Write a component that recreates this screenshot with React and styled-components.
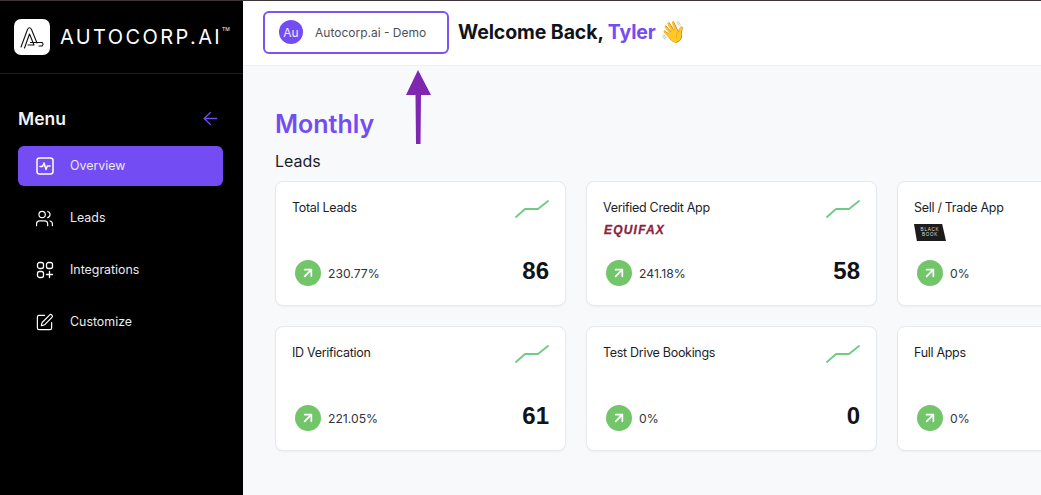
import React from 'react';
import styled, { createGlobalStyle } from 'styled-components';
import { ArrowLeft, ArrowUpRight, Users, SquarePen } from 'lucide-react';

const GlobalStyle = createGlobalStyle`
  html, body {
    margin: 0;
    padding: 0;
    height: 100%;
    overflow: hidden;
    background: #f8f9fb;
    font-family: Inter, "Liberation Sans", sans-serif;
  }
  * { box-sizing: border-box; }
`;

const Page = styled.div`
  position: relative;
  display: flex;
  width: 1041px;
  height: 495px;
  overflow: hidden;
  border-top: 1px solid #3d3537;
`;

const Sidebar = styled.aside`
  flex: 0 0 243px;
  background: #000;
  color: #fff;
  display: flex;
  flex-direction: column;
`;

const Brand = styled.div`
  height: 73px;
  flex: 0 0 73px;
  border-bottom: 1px solid #1d1d24;
  display: flex;
  align-items: center;
  padding: 0 0 0 14px;
  gap: 10px;
`;

const LogoTile = styled.div`
  width: 36px;
  height: 36px;
  border-radius: 7px;
  background: #fff;
  display: flex;
`;

const BrandName = styled.div`
  font-family: Inter, sans-serif;
  font-size: 20px;
  letter-spacing: 2.4px;
  font-weight: 400;
  line-height: 1;
  white-space: nowrap;
  sup {
    font-size: 5px;
    letter-spacing: 0;
    vertical-align: 13px;
    line-height: 0;
  }
`;

const MenuHead = styled.div`
  display: flex;
  align-items: center;
  justify-content: space-between;
  padding: 27px 22px 0 18px;
  height: 62px;
  font-size: 17.5px;
  font-weight: 600;
  color: #f3f3f3;
`;

const Nav = styled.nav`
  display: flex;
  flex-direction: column;
  gap: 12px;
  padding: 10px 20px 0 18px;
`;

const NavItem = styled.div`
  height: 40px;
  border-radius: 6px;
  display: flex;
  align-items: center;
  gap: 16px;
  padding-left: 17px;
  font-size: 12.4px;
  color: #eceaf2;
  background: ${(p) => (p.$active ? '#744cf3' : 'transparent')};
`;

const NavIcon = styled.span`
  flex: 0 0 19px;
  display: flex;
  justify-content: center;
`;

const NavLabel = styled.span`
  margin-top: -2px;
`;

const Main = styled.main`
  flex: 1;
  min-width: 0;
  display: flex;
  flex-direction: column;
`;

const Header = styled.header`
  height: 65px;
  flex: 0 0 65px;
  background: #fff;
  border-bottom: 1px solid #eff0f3;
  display: flex;
  align-items: center;
  gap: 9px;
  padding: 0 0 2px 20px;
`;

const OrgButton = styled.div`
  width: 186px;
  height: 43px;
  border: 2px solid #7b55f4;
  border-radius: 6px;
  display: flex;
  align-items: center;
  padding-left: 14px;
  gap: 12px;
  font-size: 12px;
  color: #4b4f5c;
`;

const Avatar = styled.div`
  width: 24px;
  height: 24px;
  border-radius: 50%;
  background: #744cf3;
  color: #f1edff;
  font-size: 12px;
  display: flex;
  align-items: center;
  justify-content: center;
`;

const Welcome = styled.h1`
  margin: 0;
  font-size: 19.5px;
  font-weight: 700;
  letter-spacing: -0.1px;
  color: #10131c;
  white-space: nowrap;
  span { color: #744cf3; }
`;

const Wave = styled.i`
  font-family: "Noto Color Emoji", sans-serif;
  font-style: normal;
  font-size: 21px;
  line-height: 1;
`;

const Content = styled.div`
  padding: 42px 0 0 32px;
`;

const Title = styled.h2`
  margin: 0;
  font-size: 25px;
  line-height: 32px;
  font-weight: 600;
  color: #744cf3;
`;

const Section = styled.h3`
  margin: 11px 0 0;
  font-size: 16px;
  line-height: 20px;
  font-weight: 400;
  color: #1b1e29;
`;

const Grid = styled.div`
  display: grid;
  grid-template-columns: repeat(3, 291px);
  grid-auto-rows: 125px;
  gap: 20px;
  margin-top: 10px;
`;

const Card = styled.div`
  background: #fff;
  border: 1px solid #e6e9ef;
  border-radius: 8px;
  box-shadow: 0 1px 2px rgba(20, 30, 60, 0.05);
  padding: 18px 16px 0 16px;
  display: flex;
  flex-direction: column;
`;

const CardTop = styled.div`
  display: flex;
  justify-content: space-between;
  height: 42px;
`;

const CardLabel = styled.div`
  font-size: 12.5px;
  line-height: 16px;
  color: #1b1e29;
  letter-spacing: -0.3px;
`;

const Equifax = styled.div`
  margin: 9px 0 0 1px;
  font-family: "Liberation Sans", sans-serif;
  font-size: 12px;
  line-height: 11px;
  font-weight: 700;
  font-style: italic;
  letter-spacing: 1.2px;
  -webkit-text-stroke: 0.3px #8b1f3d;
  color: #8b1f3d;
`;

const BlackBook = styled.div`
  margin-top: 8px;
  width: 32px;
  height: 17px;
  background: #1c1c1c;
  clip-path: polygon(0 0, 88% 0, 100% 100%, 9% 100%);
  color: #ddd;
  font-family: "Liberation Sans", sans-serif;
  font-size: 4.5px;
  line-height: 5px;
  letter-spacing: 0.8px;
  text-align: center;
  padding-top: 3px;
`;

const CardBottom = styled.div`
  display: flex;
  align-items: center;
  justify-content: space-between;
  margin-top: 18px;
  padding-left: 3px;
`;

const Trend = styled.div`
  display: flex;
  align-items: center;
  gap: 7px;
  font-size: 12.2px;
  color: #30333e;
`;

const TrendBadge = styled.div`
  width: 26px;
  height: 26px;
  border-radius: 50%;
  background: #72c569;
  display: flex;
  align-items: center;
  justify-content: center;
`;

const Value = styled.div`
  font-family: "Liberation Sans", sans-serif;
  font-size: 24px;
  line-height: 28px;
  font-weight: 700;
  color: #10131c;
  margin-top: -4px;
`;

// the purple annotation drawn over the screenshot
const Annotation = styled.svg`
  position: absolute;
  left: 404px;
  top: 67px;
`;

const cards = [
  { label: 'Total Leads', pct: '230.77%', value: '86', chart: true },
  { label: 'Verified Credit App', pct: '241.18%', value: '58', chart: true, logo: 'equifax' },
  { label: 'Sell / Trade App', pct: '0%', value: '', logo: 'blackbook' },
  { label: 'ID Verification', pct: '221.05%', value: '61', chart: true },
  { label: 'Test Drive Bookings', pct: '0%', value: '0', chart: true },
  { label: 'Full Apps', pct: '0%', value: '' },
];

function LogoMark() {
  return (
    <svg width="36" height="36" viewBox="0 0 36 36" fill="none" stroke="#111" strokeWidth="1.1" strokeLinejoin="round" strokeLinecap="round">
      <path d="M7 28 L13.5 10.5 Q15.5 7 17.5 10.5 L23 24" />
      <path d="M10.5 29 L15.5 15 L20 26 H14" />
      <path d="M16.5 23.5 H28 Q30 25 28 27 H25" />
    </svg>
  );
}

function PulseIcon() {
  return (
    <svg width="18" height="18" viewBox="0 0 18 18" fill="none" stroke="#fff" strokeWidth="1.5" strokeLinecap="round" strokeLinejoin="round">
      <rect x="1" y="1" width="16" height="16" rx="2.5" />
      <path d="M4 9.5 H6.5 L8 6 L10 12.5 L11.3 9 H14" />
    </svg>
  );
}

function AppsIcon() {
  return (
    <svg width="18" height="18" viewBox="0 0 18 18" fill="none" stroke="#fff" strokeWidth="1.3" strokeLinecap="round">
      <rect x="1.5" y="1.5" width="6" height="6" rx="2" />
      <rect x="10.5" y="1.5" width="6" height="6" rx="2" />
      <rect x="1.5" y="10.5" width="6" height="6" rx="2" />
      <path d="M13.5 10.5 V16.5 M10.5 13.5 H16.5" />
    </svg>
  );
}

function Spark() {
  return (
    <svg width="34" height="18" viewBox="0 0 34 18" fill="none" stroke="#6fca84" strokeWidth="1.8" strokeLinecap="round" strokeLinejoin="round">
      <path d="M1 17 L10 9 H23 L33 1" />
    </svg>
  );
}

export default function App() {
  return (
    <Page>
      <GlobalStyle />
      <Sidebar>
        <Brand>
          <LogoTile><LogoMark /></LogoTile>
          <BrandName>AUTOCORP.AI<sup>TM</sup></BrandName>
        </Brand>
        <MenuHead>
          Menu
          <ArrowLeft size={21} color="#744cf3" strokeWidth={1.6} />
        </MenuHead>
        <Nav>
          <NavItem $active><NavIcon><PulseIcon /></NavIcon><NavLabel>Overview</NavLabel></NavItem>
          <NavItem><NavIcon><Users size={19} strokeWidth={1.5} color="#fff" /></NavIcon><NavLabel>Leads</NavLabel></NavItem>
          <NavItem><NavIcon><AppsIcon /></NavIcon><NavLabel>Integrations</NavLabel></NavItem>
          <NavItem><NavIcon><SquarePen size={19} strokeWidth={1.5} color="#fff" /></NavIcon><NavLabel>Customize</NavLabel></NavItem>
        </Nav>
      </Sidebar>
      <Main>
        <Header>
          <OrgButton>
            <Avatar>Au</Avatar>
            Autocorp.ai - Demo
          </OrgButton>
          <Welcome>
            Welcome Back, <span>Tyler</span> <Wave>👋</Wave>
          </Welcome>
        </Header>
        <Content>
          <Title>Monthly</Title>
          <Section>Leads</Section>
          <Grid>
            {cards.map((c) => (
              <Card key={c.label}>
                <CardTop>
                  <div>
                    <CardLabel>{c.label}</CardLabel>
                    {c.logo === 'equifax' && <Equifax>EQUIFAX</Equifax>}
                    {c.logo === 'blackbook' && <BlackBook>BLACK<br />BOOK</BlackBook>}
                  </div>
                  {c.chart && <Spark />}
                </CardTop>
                <CardBottom>
                  <Trend>
                    <TrendBadge><ArrowUpRight size={16} color="#fff" strokeWidth={2.6} /></TrendBadge>
                    {c.pct}
                  </Trend>
                  <Value>{c.value}</Value>
                </CardBottom>
              </Card>
            ))}
          </Grid>
        </Content>
      </Main>
      <Annotation width="28" height="78" viewBox="0 0 28 78">
        <path d="M14 2 L27 27 H17 L16.5 76 H12 L11.5 27 H2 Z" fill="#7f27b0" />
      </Annotation>
    </Page>
  );
}
